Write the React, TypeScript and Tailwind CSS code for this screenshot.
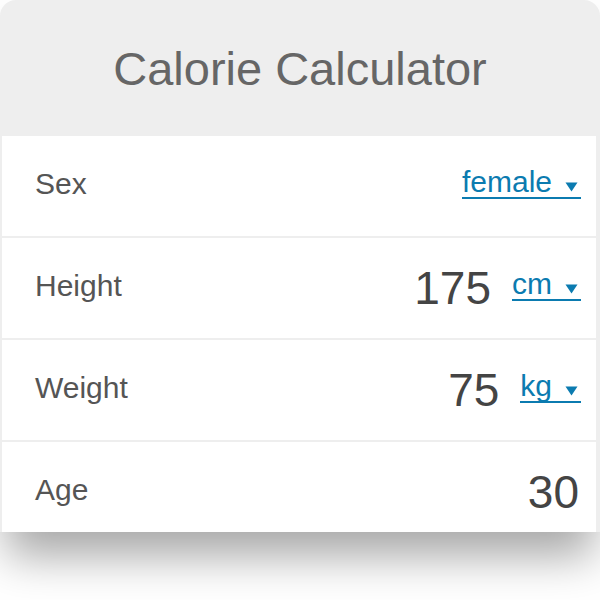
import React from 'react';

interface RowProps {
  label: string;
  value?: string;
  unit?: string;
}

const Caret = () => (
  <svg width="13" height="10" viewBox="0 0 13 10" className="mb-[3px] ml-[13px] mr-[3px]">
    <path d="M0.5 0.5 L12.5 0.5 L6.5 9.5 Z" fill="currentColor" />
  </svg>
);

const Row: React.FC<RowProps> = ({ label, value, unit }) => (
  <div className="flex h-[100px] shrink-0 items-center justify-between bg-white pl-[33px] pr-[15px]">
    <span className="-mt-[6px] text-[30px] text-[#555555]">{label}</span>
    <div className="flex items-center">
      {value && (
        <span className={`text-[46px] leading-none text-[#444444] ${unit ? '' : 'mr-[2px]'}`}>{value}</span>
      )}
      {unit && (
        <a className="-mt-[6px] ml-[21px] inline-flex cursor-pointer items-baseline border-b-2 border-[#0b7bb0] text-[30px] leading-[30px] text-[#0b7bb0]">
          <span>{unit}</span>
          <Caret />
        </a>
      )}
    </div>
  </div>
);

export default function App() {
  const rows: RowProps[] = [
    { label: 'Sex', unit: 'female' },
    { label: 'Height', value: '175', unit: 'cm' },
    { label: 'Weight', value: '75', unit: 'kg' },
    { label: 'Age', value: '30' },
  ];

  return (
    <div className="h-[600px] w-[600px] overflow-hidden bg-white font-['Liberation_Sans',Arial,sans-serif]">
      <div className="flex h-[532px] flex-col overflow-hidden rounded-t-[16px] bg-[#eeeeee] shadow-[0_30px_45px_-6px_rgba(0,0,0,0.35)]">
        <div className="flex h-[136px] shrink-0 items-center justify-center pt-[3px]">
          <h1 className="text-[47px] text-[#666666]">Calorie Calculator</h1>
        </div>
        <div className="ml-[2px] mr-[4px] flex flex-col gap-[2px]">
          {rows.map((r) => (
            <Row key={r.label} {...r} />
          ))}
        </div>
      </div>
    </div>
  );
}
